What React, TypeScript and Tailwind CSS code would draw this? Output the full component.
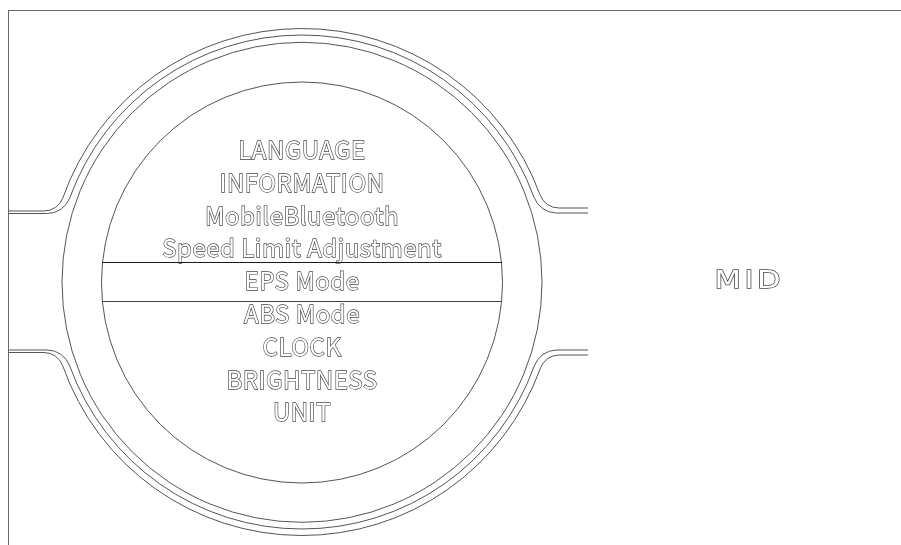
import React from "react";

const CX = 302;
const CY = 282;

const items = [
  "LANGUAGE",
  "INFORMATION",
  "MobileBluetooth",
  "Speed Limit Adjustment",
  "EPS Mode",
  "ABS Mode",
  "CLOCK",
  "BRIGHTNESS",
  "UNIT",
];

// point where a fillet of radius f joins a horizontal line y=h to the ring of radius R
function fillet(R: number, h: number, f: number, side: number, up: boolean) {
  const fy = up ? h - f : h + f;
  const dy = fy - CY;
  const dx = Math.sqrt((R + f) ** 2 - dy ** 2);
  const k = R / (R + f);
  return { lx: CX + side * dx, tx: CX + side * dx * k, ty: CY + dy * k };
}

type Edge = { h: number; f: number };

function ringLine(R: number, left: Edge, right: Edge, up: boolean) {
  const a = fillet(R, left.h, left.f, -1, up);
  const b = fillet(R, right.h, right.f, 1, up);
  const s = up ? 0 : 1;
  return [
    `M 8.5 ${left.h}`,
    `L ${a.lx} ${left.h}`,
    `A ${left.f} ${left.f} 0 0 ${s} ${a.tx} ${a.ty}`,
    `A ${R} ${R} 0 0 ${1 - s} ${b.tx} ${b.ty}`,
    `A ${right.f} ${right.f} 0 0 ${s} ${b.lx} ${right.h}`,
    `L 588 ${right.h}`,
  ].join(" ");
}

// hollow lettering: white fill painted over a stroke so only the outer edge shows
const outline = "text-white [-webkit-text-stroke:1.3px_#454545] [paint-order:stroke_fill]";

function Drawing() {
  return (
    <svg
      className="absolute inset-0 pointer-events-none"
      width={901}
      height={545}
      viewBox="0 0 901 545"
      fill="none"
      stroke="#555"
      strokeWidth={1}
    >
      {/* outer handlebar rim, doubled */}
      <path d={ringLine(253.5, { h: 211, f: 20 }, { h: 208, f: 20 }, true)} />
      <path d={ringLine(247, { h: 213.5, f: 24 }, { h: 213, f: 24 }, true)} />
      <path d={ringLine(247, { h: 350, f: 24 }, { h: 350, f: 24 }, false)} />
      <path d={ringLine(253.5, { h: 352.5, f: 20 }, { h: 355, f: 20 }, false)} />
      {/* bezel + screen */}
      <circle cx={CX} cy={CY + 0.3} r={240} />
      <circle cx={CX} cy={CY + 0.5} r={200.5} />
    </svg>
  );
}

export default function App() {
  return (
    <div className="relative w-[901px] h-[545px] bg-white overflow-hidden font-['Noto_Sans_CJK_SC','Noto_Sans',sans-serif]">
      <Drawing />
      <div className="relative ml-[8px] mt-[10px] h-[535px] flex border-l border-t border-[#666]">
        {/* menu on the round screen */}
        <div className="w-[586px] pl-[93px] pt-[122px]">
          <div className="w-[400px] flex flex-col text-[24px] leading-[32.8px] tracking-[0.5px] text-center will-change-transform">
            {items.map((it) =>
              it === "EPS Mode" ? (
                <div
                  key={it}
                  className="h-[40px] -mt-[2px] -mb-[5.2px] pt-[1px] border-t border-b border-t-[#1a1a1a] border-b-[#444]"
                >
                  <span className={outline}>{it}</span>
                </div>
              ) : (
                <div key={it} className="h-[32.8px]">
                  <span className={outline}>{it}</span>
                </div>
              )
            )}
          </div>
        </div>

        {/* right side label */}
        <div className="flex-1 flex items-center justify-center pt-[3px] will-change-transform">
          <span
            className={`inline-block scale-x-[1.2] font-['DejaVu_Sans',sans-serif] text-[25.5px] tracking-[3px] pl-[3px] ${outline}`}
          >
            MID
          </span>
        </div>
      </div>
    </div>
  );
}
